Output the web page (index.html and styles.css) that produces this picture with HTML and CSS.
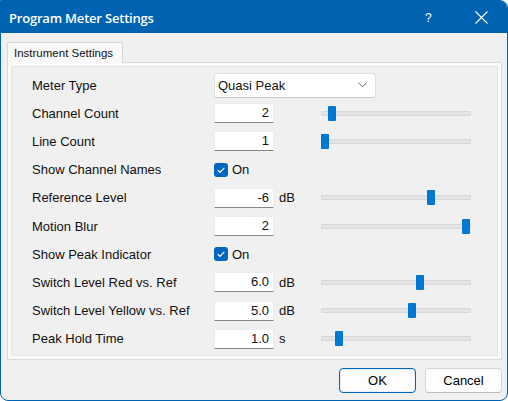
FILE: index.html
```html
<!DOCTYPE html>
<html>
<head>
<meta charset="utf-8">
<link rel="stylesheet" href="styles.css">
</head>
<body>
<div class="window">
  <header class="titlebar">
    <span class="title">Program Meter Settings</span>
    <span class="help">?</span>
    <span class="close"><svg width="13" height="13" viewBox="0 0 13 13"><path d="M0.5 0.5 L12.5 12.5 M12.5 0.5 L0.5 12.5" stroke="#fff" stroke-width="1.1" fill="none"/></svg></span>
  </header>
  <div class="body">
    <div class="tabs"><div class="tab">Instrument Settings</div></div>
    <div class="page">
      <div class="panel">
        <div class="row">
          <span class="label">Meter Type</span>
          <div class="select"><span>Quasi Peak</span><svg width="9" height="6" viewBox="0 0 9 6"><path d="M0.5 0.8 L4.5 4.8 L8.5 0.8" stroke="#606060" stroke-width="1" fill="none"/></svg></div>
        </div>
        <div class="row">
          <span class="label">Channel Count</span>
          <div class="ctrl"><span class="input">2</span></div>
          <div class="slider"><div class="track"></div><div class="thumb" style="left:7px"></div></div>
        </div>
        <div class="row">
          <span class="label">Line Count</span>
          <div class="ctrl"><span class="input">1</span></div>
          <div class="slider"><div class="track"></div><div class="thumb" style="left:0px"></div></div>
        </div>
        <div class="row">
          <span class="label">Show Channel Names</span>
          <div class="ctrl"><span class="check"><svg width="14" height="14" viewBox="0 0 14 14"><path d="M3.8 7.2 L6 9.3 L10.3 4.9" stroke="#fff" stroke-width="1.2" fill="none"/></svg></span><span class="on">On</span></div>
        </div>
        <div class="row">
          <span class="label">Reference Level</span>
          <div class="ctrl"><span class="input">-6</span><span class="unit">dB</span></div>
          <div class="slider"><div class="track"></div><div class="thumb" style="left:106px"></div></div>
        </div>
        <div class="row">
          <span class="label">Motion Blur</span>
          <div class="ctrl"><span class="input">2</span></div>
          <div class="slider"><div class="track"></div><div class="thumb" style="left:141px"></div></div>
        </div>
        <div class="row">
          <span class="label">Show Peak Indicator</span>
          <div class="ctrl"><span class="check"><svg width="14" height="14" viewBox="0 0 14 14"><path d="M3.8 7.2 L6 9.3 L10.3 4.9" stroke="#fff" stroke-width="1.2" fill="none"/></svg></span><span class="on">On</span></div>
        </div>
        <div class="row">
          <span class="label">Switch Level Red vs. Ref</span>
          <div class="ctrl"><span class="input">6.0</span><span class="unit">dB</span></div>
          <div class="slider"><div class="track"></div><div class="thumb" style="left:95px"></div></div>
        </div>
        <div class="row">
          <span class="label">Switch Level Yellow vs. Ref</span>
          <div class="ctrl"><span class="input">5.0</span><span class="unit">dB</span></div>
          <div class="slider"><div class="track"></div><div class="thumb" style="left:87px"></div></div>
        </div>
        <div class="row">
          <span class="label">Peak Hold Time</span>
          <div class="ctrl"><span class="input">1.0</span><span class="unit">s</span></div>
          <div class="slider"><div class="track"></div><div class="thumb" style="left:14px"></div></div>
        </div>
      </div>
    </div>
    <div class="footer">
      <button class="btn primary">OK</button>
      <button class="btn">Cancel</button>
    </div>
  </div>
</div>
</body>
</html>
```
FILE: styles.css
```css
* { box-sizing: border-box; }
html, body { margin: 0; padding: 0; background: #ffffff; }
body {
  font-family: "Liberation Sans", Arial, sans-serif;
  font-size: 13px;
  color: #111;
}
.window {
  width: 508px;
  height: 401px;
  border: 1px solid #0063b1;
  border-radius: 0 8px 8px 8px;
  overflow: hidden;
  background: #f0f0f0;
  display: flex;
  flex-direction: column;
}
.titlebar {
  height: 32px;
  background: #0063b1;
  color: #fff;
  display: flex;
  align-items: center;
  padding-left: 8px;
  flex: none;
}
.title {
  font-family: "Open Sans", "Liberation Sans", sans-serif;
  font-weight: 600;
  font-size: 13px;
  letter-spacing: -0.2px;
  flex: 1;
  margin-top: 1px;
}
.help {
  font-size: 12px;
  width: 12px;
  margin-right: 38px;
  margin-top: 1px;
}
.close {
  display: flex;
  margin-right: 19px;
  margin-top: 1px;
}
.body {
  flex: 1;
  display: flex;
  flex-direction: column;
}
.tabs {
  padding: 9px 0 0 6px;
  display: flex;
}
.tab {
  height: 21px;
  width: 116px;
  border: 1px solid #d9d9d9;
  border-bottom: none;
  background: #f9f9f9;
  font-size: 11.5px;
  padding-left: 6px;
  line-height: 20px;
  position: relative;
  z-index: 1;
}
.page {
  width: 495px;
  height: 298px;
  margin-left: 6px;
  margin-top: -1px;
  border: 1px solid #dadada;
  background: #fafafa;
  padding: 3px;
}
.panel {
  height: 100%;
  border: 1px solid #e6e6e6;
  background: #f0f0f0;
  padding: 4px 0 0 20px;
}
.row {
  height: 28.2px;
  display: flex;
  align-items: center;
}
.label {
  width: 182px;
  flex: none;
}
.ctrl {
  width: 107px;
  flex: none;
  display: flex;
  align-items: center;
}
.select {
  width: 162px;
  height: 25px;
  background: #fff;
  border: 1px solid #e2e2e2;
  border-bottom-color: #c8c8c8;
  border-radius: 3px;
  display: flex;
  align-items: center;
  justify-content: space-between;
  padding: 0 8px 0 3px;
}
.input {
  width: 60px;
  height: 20px;
  background: #fff;
  border: 1px solid #ececec;
  border-bottom: 1px solid #868686;
  border-radius: 2px 2px 0 0;
  text-align: right;
  padding-right: 4px;
  line-height: 18px;
}
.unit {
  margin-left: 5px;
}
.check {
  width: 14px;
  height: 14px;
  border-radius: 3px;
  background: #0067c0;
  display: flex;
}
.on {
  margin-left: 4px;
}
.slider {
  position: relative;
  width: 150px;
  height: 15px;
  display: flex;
  align-items: center;
}
.track {
  width: 100%;
  height: 5px;
  background: #e4e4e4;
  border: 1px solid #d8d8d8;
  border-radius: 1px;
}
.thumb {
  position: absolute;
  top: 0;
  width: 8px;
  height: 15px;
  background: #0078d4;
  border-radius: 1px;
}
.footer {
  display: flex;
  justify-content: flex-end;
  gap: 9px;
  padding: 8px 5px 0 0;
}
.btn {
  width: 77px;
  height: 25px;
  font-family: "Liberation Sans", Arial, sans-serif;
  font-size: 13px;
  color: #000;
  background: #fdfdfd;
  border: 1px solid #d5d5d5;
  border-bottom-color: #bcbcbc;
  border-radius: 4px;
  padding: 0;
}
.btn.primary {
  border: 1px solid #0067c0;
  box-shadow: inset 0 0 0 1px #e6f0fa;
}
```
